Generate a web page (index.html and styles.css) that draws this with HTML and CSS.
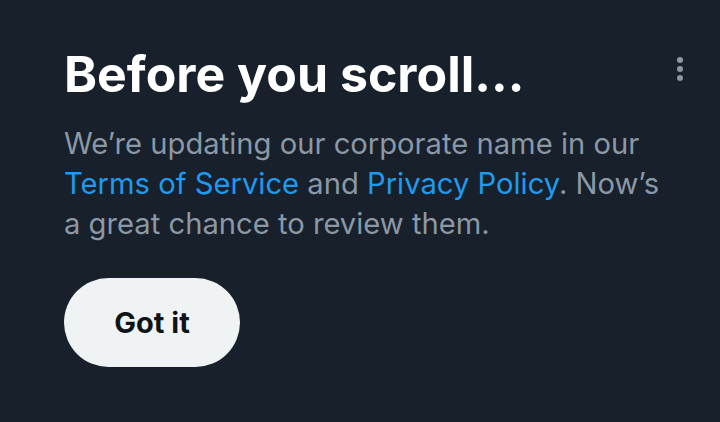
FILE: index.html
```html
<!DOCTYPE html>
<html>
<head>
<meta charset="utf-8">
<link rel="stylesheet" href="styles.css">
</head>
<body>
<div class="sheet">
  <div class="header">
    <h1 class="title">Before you scroll...</h1>
    <button class="more" aria-label="More">
      <svg width="8" height="26" viewBox="0 0 8 26"><circle cx="4" cy="4" r="3" fill="#8b98a5"/><circle cx="4" cy="13" r="3" fill="#8b98a5"/><circle cx="4" cy="22" r="3" fill="#8b98a5"/></svg>
    </button>
  </div>
  <p class="text">We’re updating our corporate name in our <a class="link" href="#">Terms of Service</a> and <a class="link" href="#">Privacy Policy</a>. Now’s a great chance to review them.</p>
  <button class="got">Got it</button>
</div>
</body>
</html>
```
FILE: styles.css
```css
html, body { margin: 0; padding: 0; background: #17202b; }
body { width: 720px; height: 422px; overflow: hidden; font-family: Inter, "Noto Sans", sans-serif; }
.sheet { padding: 44px 0 0 64px; display: flex; flex-direction: column; align-items: flex-start; }
.header { display: flex; justify-content: space-between; width: 624px; align-items: flex-start; }
.title { margin: 0; color: #fff; font-size: 50px; font-weight: 700; line-height: 60px; letter-spacing: 0; }
.more { background: none; border: 0; padding: 0; margin: 10px 0 0 0; width: 16px; height: 30px; display: flex; align-items: center; justify-content: center; }
.text { margin: 20px 0 0 0; width: 610px; color: #8b98a5; font-size: 29.2px; line-height: 40px; }
.link { color: #1d9bf0; text-decoration: none; }
.got { margin-top: 34px; width: 176px; height: 89px; border-radius: 45px; border: 0; background: #eff3f4; color: #0f1419; font-family: Inter, sans-serif; font-size: 29px; font-weight: 700; }
```
